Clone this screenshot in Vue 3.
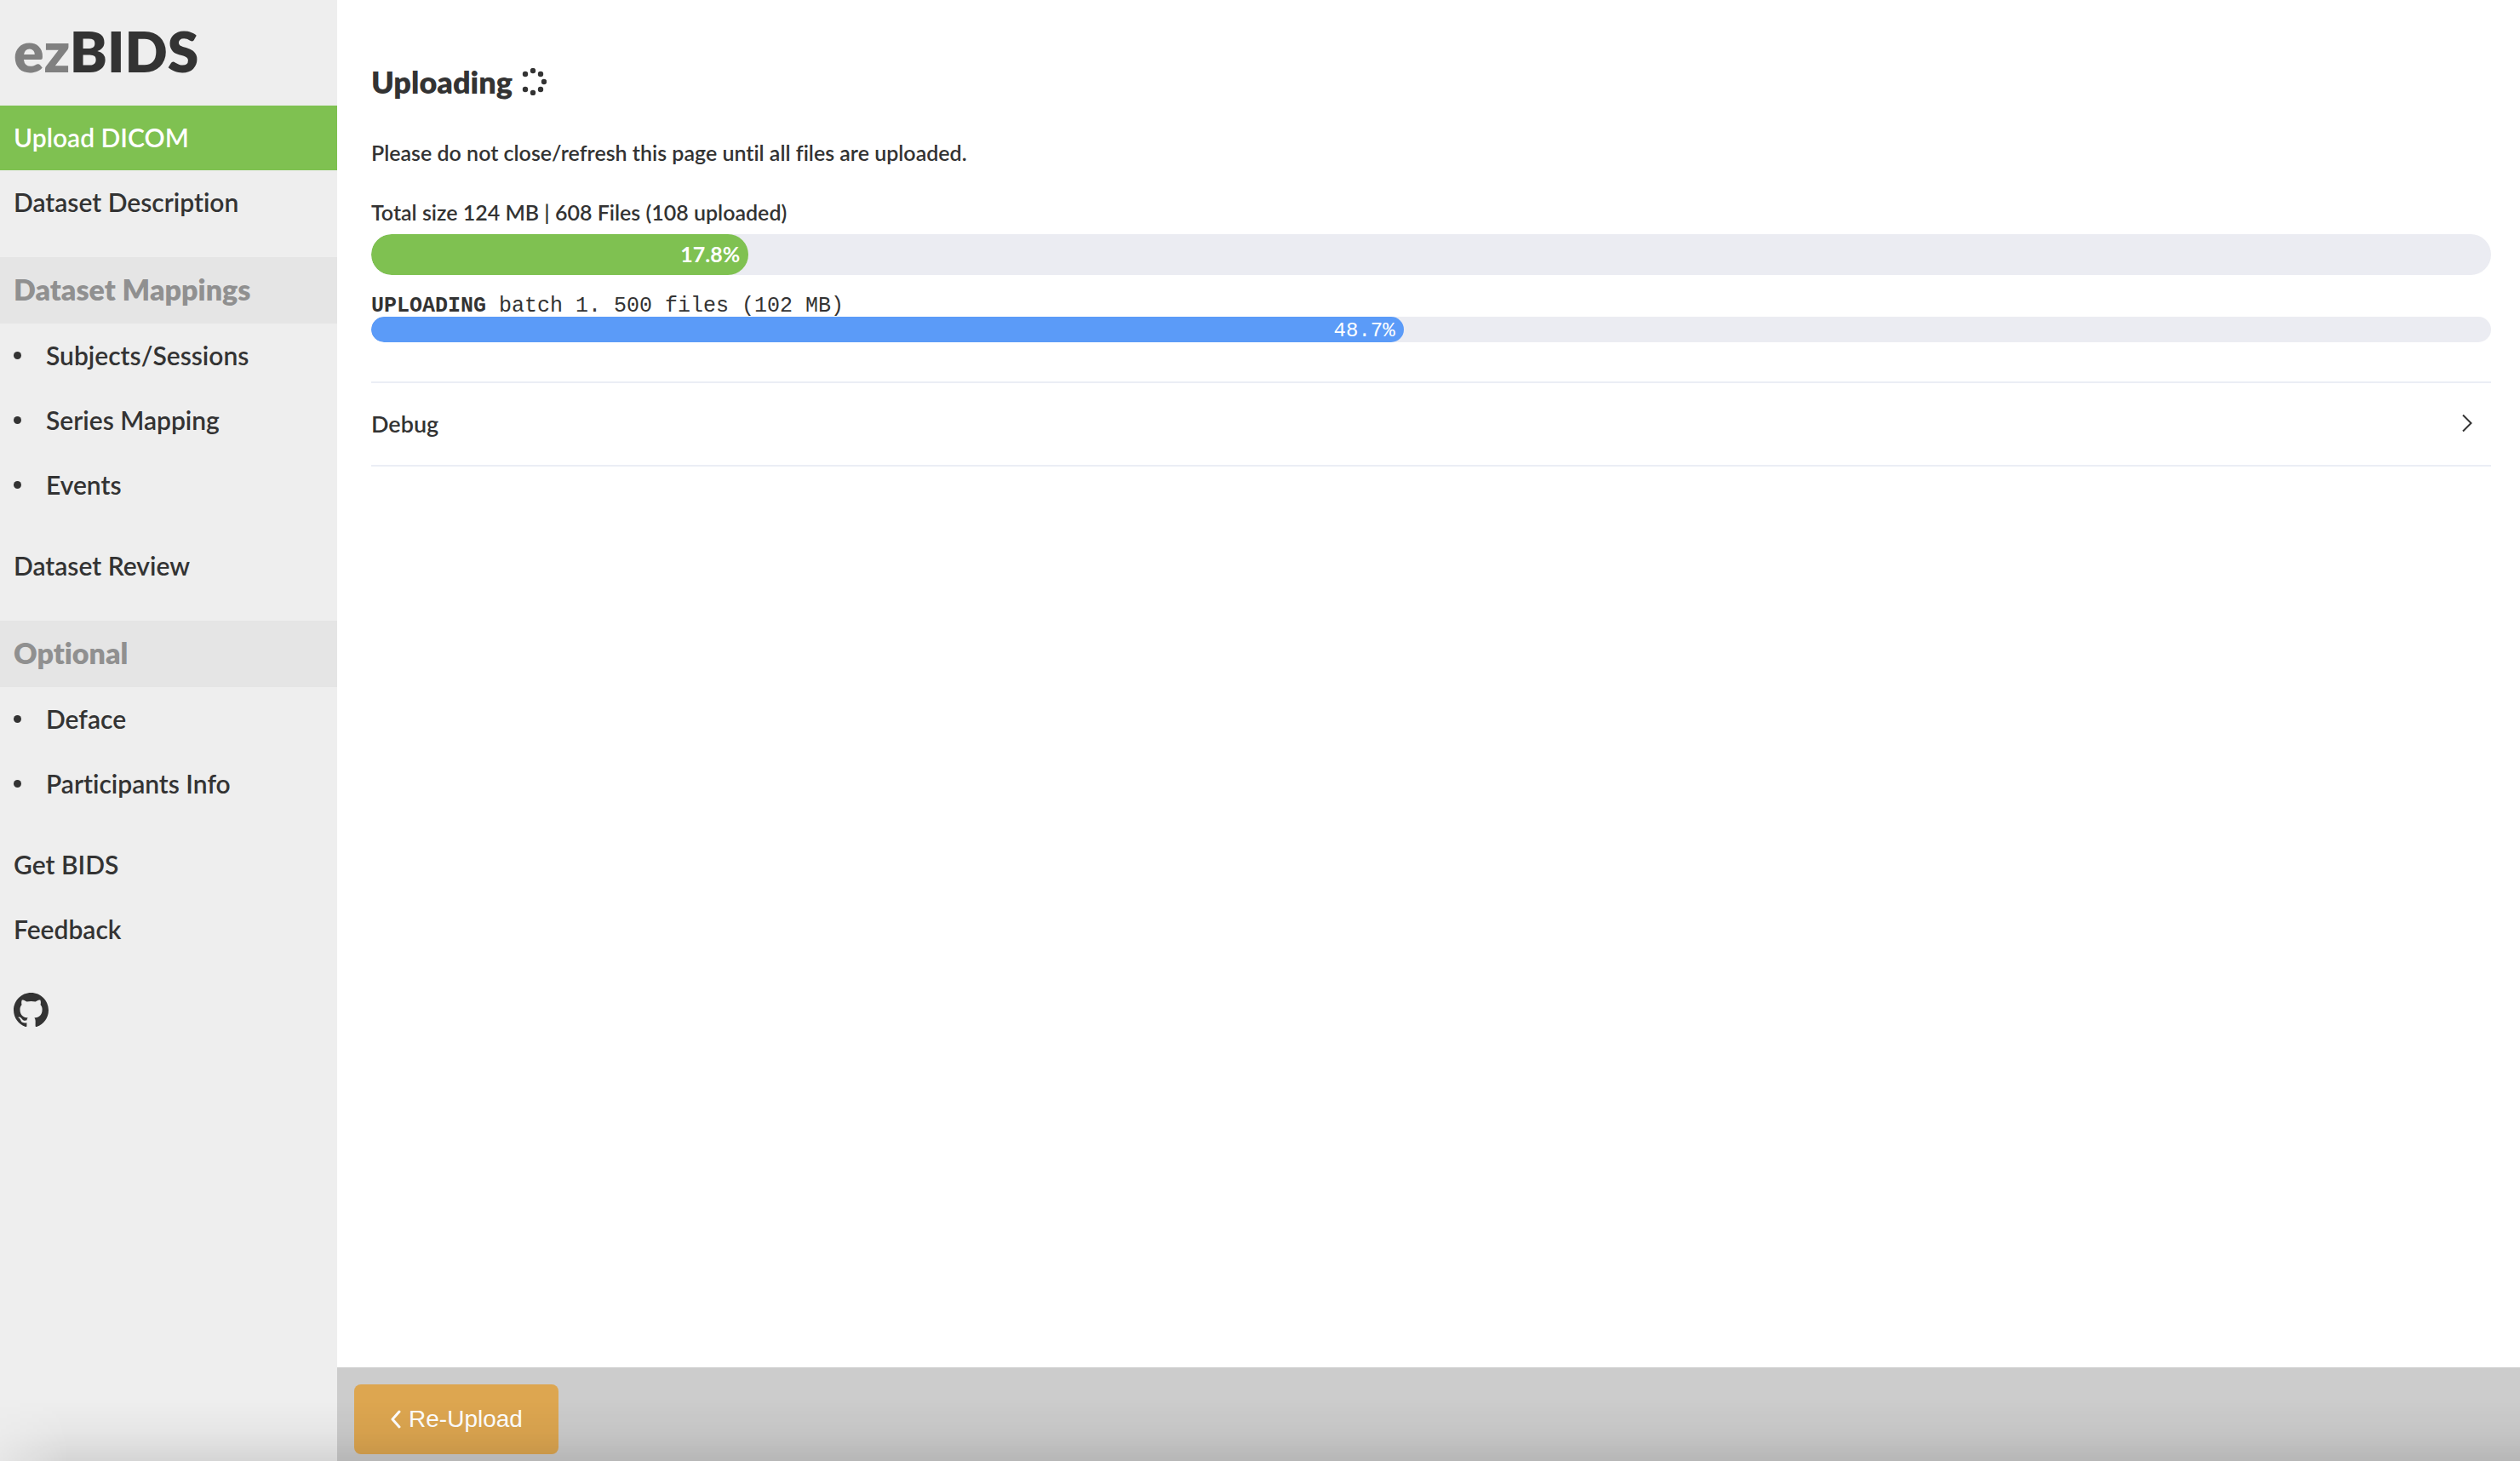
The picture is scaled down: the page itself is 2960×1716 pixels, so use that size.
<script setup>
const groups = [
  { items: [{ label: 'Upload DICOM', active: true }, { label: 'Dataset Description' }] },
  { title: 'Dataset Mappings', sub: true, items: [{ label: 'Subjects/Sessions' }, { label: 'Series Mapping' }, { label: 'Events' }] },
  { items: [{ label: 'Dataset Review' }] },
  { title: 'Optional', sub: true, items: [{ label: 'Deface' }, { label: 'Participants Info' }] },
  { items: [{ label: 'Get BIDS' }, { label: 'Feedback' }] },
]
const total = 17.8
const batch = 48.7
const dots = [[16, 3], [25, 7], [29, 16], [25, 25], [16, 29], [7, 25], [7, 7]]
</script>

<template>
  <div class="app">
    <aside class="sidebar">
      <h1 class="logo"><span>ez</span>BIDS</h1>
      <nav>
        <section v-for="(g, i) in groups" :key="i" class="group">
          <h2 v-if="g.title">{{ g.title }}</h2>
          <ul>
            <li v-for="item in g.items" :key="item.label">
              <a href="#" :class="{ active: item.active, sub: g.sub }">{{ item.label }}</a>
            </li>
          </ul>
        </section>
      </nav>
      <a href="#" class="github" aria-label="GitHub">
        <svg viewBox="0 0 16 16" fill="currentColor">
          <path d="M8 0C3.58 0 0 3.58 0 8c0 3.54 2.29 6.53 5.47 7.59.4.07.55-.17.55-.38 0-.19-.01-.82-.01-1.49-2.01.37-2.53-.49-2.69-.94-.09-.23-.48-.94-.82-1.13-.28-.15-.68-.52-.01-.53.63-.01 1.08.58 1.23.82.72 1.21 1.87.87 2.33.66.07-.52.28-.87.51-1.07-1.78-.2-3.64-.89-3.64-3.95 0-.87.31-1.59.82-2.15-.08-.2-.36-1.02.08-2.12 0 0 .67-.21 2.2.82.64-.18 1.32-.27 2-.27s1.36.09 2 .27c1.53-1.04 2.2-.82 2.2-.82.44 1.1.16 1.92.08 2.12.51.56.82 1.27.82 2.15 0 3.07-1.87 3.75-3.65 3.95.29.25.54.73.54 1.48 0 1.07-.01 1.93-.01 2.2 0 .21.15.46.55.38A8.01 8.01 0 0 0 16 8c0-4.42-3.58-8-8-8z" />
        </svg>
      </a>
    </aside>

    <div class="page">
      <main>
        <h3 class="title">
          Uploading
          <svg viewBox="0 0 32 32" fill="currentColor" aria-hidden="true">
            <circle v-for="(d, i) in dots" :key="i" :cx="d[0]" :cy="d[1]" r="3.2" />
          </svg>
        </h3>
        <p class="notice">Please do not close/refresh this page until all files are uploaded.</p>
        <p class="summary">Total size 124 MB | 608 Files (108 uploaded)</p>
        <div class="bar" role="progressbar" aria-label="Total" :aria-valuenow="total">
          <div class="fill" :style="{ width: total + '%' }">{{ total }}%</div>
        </div>
        <div class="batch">
          <p><b>UPLOADING</b> batch 1. 500 files (102 MB)</p>
          <div class="bar small" role="progressbar" aria-label="Batch 1" :aria-valuenow="batch">
            <div class="fill" :style="{ width: batch + '%' }">{{ batch }}%</div>
          </div>
        </div>
        <button class="debug" type="button" aria-expanded="false">
          Debug
          <svg viewBox="0 0 12 22" fill="none" stroke="currentColor" stroke-width="2"><path d="M1 1.500L10.500 11L1 20.500" /></svg>
        </button>
      </main>
      <footer>
        <button class="back" type="button">
          <svg viewBox="0 0 14 22" fill="none" stroke="currentColor" stroke-width="3" stroke-linecap="round" stroke-linejoin="round"><path d="M11 2L3 11L11 20" /></svg>
          Re-Upload
        </button>
      </footer>
    </div>
  </div>
</template>

<style>
body {
  margin: 0;
}
</style>

<style scoped>
.app {
  position: relative;
  display: flex;
  min-height: 100vh;
  color: #333;
  background: #fff;
  font-family: Lato, "Open Sans", sans-serif;
  font-weight: 600;
  font-variant-ligatures: none;
}
.app::after {
  content: "";
  position: absolute;
  inset: auto 0 0;
  height: 70px;
  background: linear-gradient(to bottom, transparent, rgba(0, 0, 0, 0.03) 50%, rgba(0, 0, 0, 0.1));
  mask-image: linear-gradient(to right, rgba(0, 0, 0, 0.3), #000 80px);
  pointer-events: none;
}
h1, h2, h3, p, ul {
  margin: 0;
  padding: 0;
}
.sidebar {
  flex: 0 0 396px;
  background: #eee;
}
.logo {
  padding: 0 0 4px 16px;
  line-height: 120px;
  font-size: 66px;
  font-weight: 800;
}
.logo span {
  color: #808080;
}
.group {
  margin-bottom: 19px;
}
.group h2 {
  margin-top: 26px;
  padding: 0 0 2px 16px;
  line-height: 76px;
  font-size: 34px;
  font-weight: 800;
  color: #909090;
  background: #e5e5e5;
}
ul {
  list-style: none;
}
li a {
  display: flex;
  align-items: center;
  padding: 0 0 2px 16px;
  line-height: 74px;
  font-size: 30px;
  color: inherit;
  text-decoration: none;
}
li a.active {
  color: #fff;
  background: #7fc151;
}
li a.sub::before {
  content: "";
  width: 9px;
  height: 9px;
  margin-right: 29px;
  border-radius: 50%;
  background: currentColor;
}
.github {
  display: block;
  width: 41px;
  margin: 36px 0 0 16px;
  color: inherit;
}
.github svg {
  display: block;
}
.page {
  flex: 1;
  display: flex;
  flex-direction: column;
}
main {
  flex: 1;
  padding: 72px 34px 40px 40px;
}
.title {
  display: flex;
  align-items: center;
  gap: 8px;
  line-height: 48px;
  font-size: 36px;
  font-weight: 800;
}
.title svg {
  width: 32px;
}
.notice, .summary {
  font-size: 25px;
  line-height: 40px;
}
.notice {
  margin-top: 39px;
}
.summary {
  margin: 30px 0 6px;
}
.bar {
  border-radius: 24px;
  background: #ebecf2;
  overflow: hidden;
}
.fill {
  box-sizing: border-box;
  padding: 0 10px 2px 0;
  border-radius: 24px;
  line-height: 46px;
  font-size: 25px;
  font-weight: 700;
  text-align: right;
  color: #fff;
  background: #7fc151;
}
.batch {
  margin: 24px 0 46px;
  font-family: "Liberation Mono", monospace;
  font-size: 25px;
  font-weight: 400;
  line-height: 25px;
}
.small .fill {
  padding: 4px 10px 0 0;
  line-height: 26px;
  font-size: 24px;
  font-weight: 400;
  background: #5b9bf8;
}
.debug {
  display: flex;
  justify-content: space-between;
  align-items: center;
  width: 100%;
  height: 100px;
  padding: 0 22px 2px 0;
  border: solid #ebeef5;
  border-width: 2px 0;
  background: none;
  color: inherit;
  font: inherit;
  font-size: 27px;
}
.debug svg {
  width: 12px;
}
footer {
  padding: 20px 20px 8px;
  background: #ccc;
}
.back {
  display: flex;
  align-items: center;
  justify-content: center;
  gap: 8px;
  width: 240px;
  height: 82px;
  padding: 0;
  border: 0;
  border-radius: 8px;
  background: #dda650;
  color: #fff;
  font-family: "Liberation Sans", sans-serif;
  font-size: 28px;
}
.back svg {
  width: 14px;
}
</style>
